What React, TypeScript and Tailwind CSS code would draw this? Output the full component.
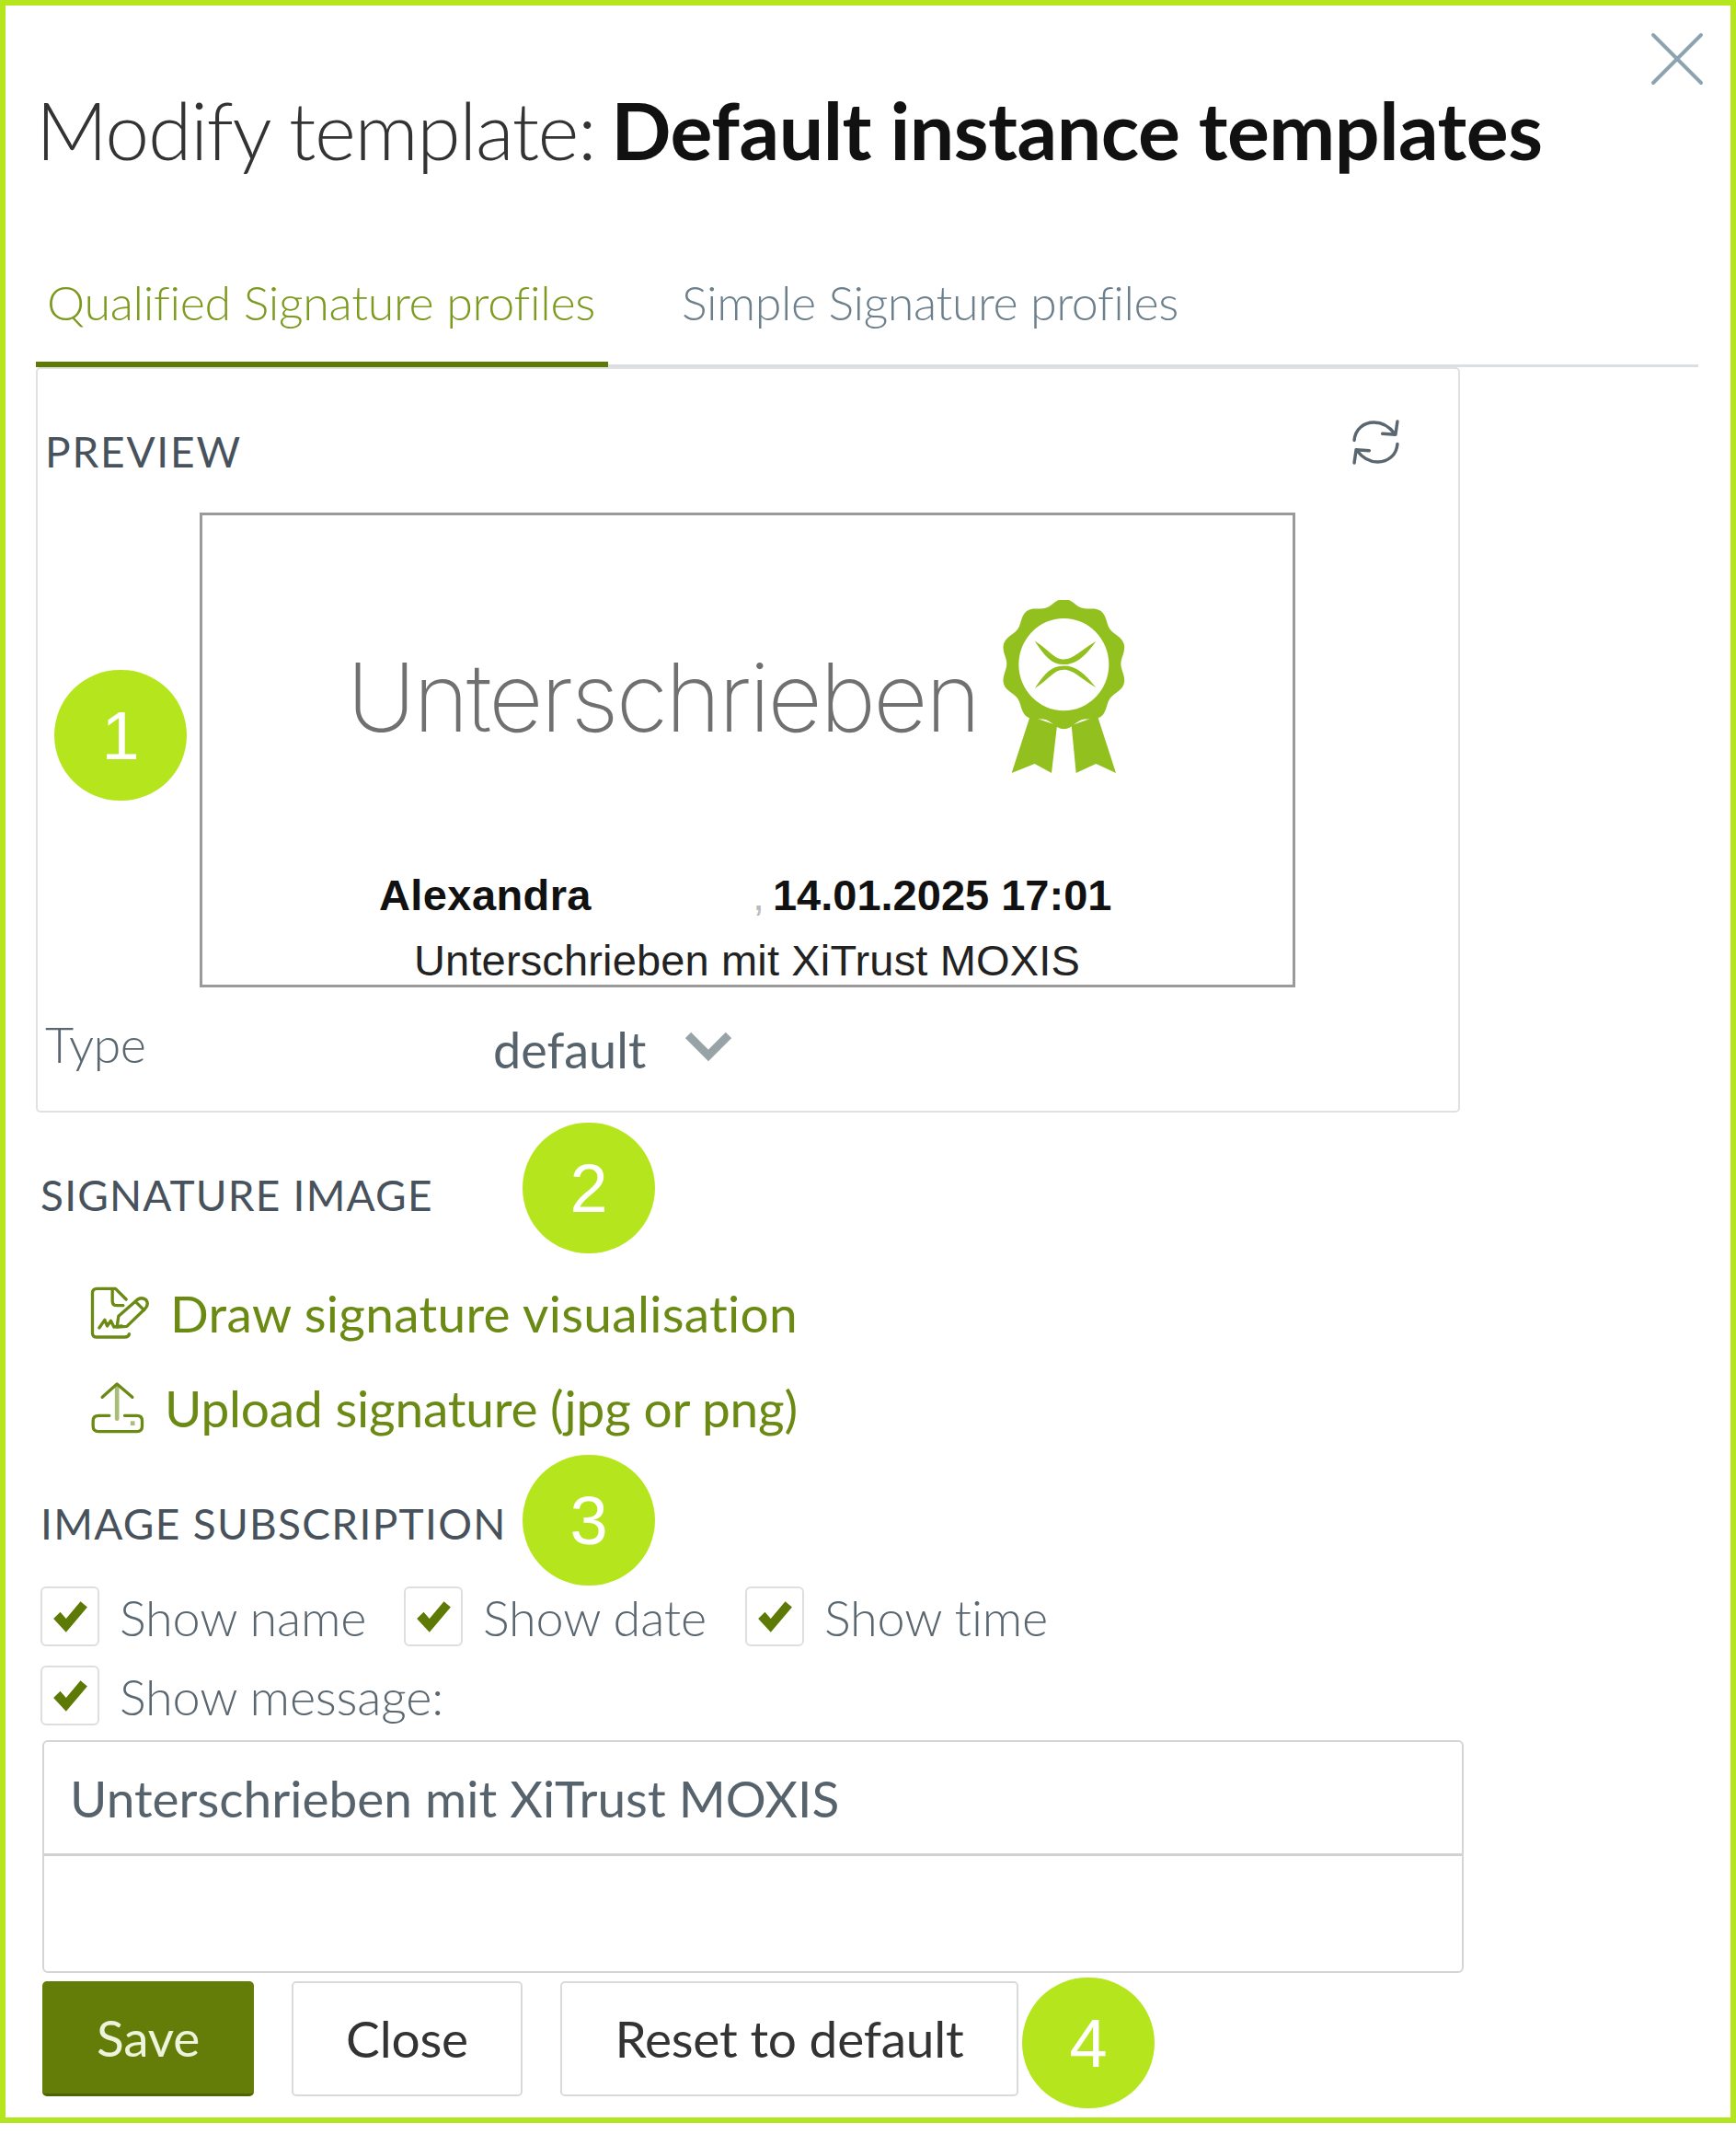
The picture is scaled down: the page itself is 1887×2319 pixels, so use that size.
import React from "react";
import { X } from "lucide-react";

const LATO = "font-['Lato','Liberation_Sans',sans-serif]";

function Medal() {
  const pts: string[] = [];
  for (let i = 0; i < 120; i++) {
    const a = (i / 120) * Math.PI * 2 - Math.PI / 2;
    const r = 196 + 10 * Math.cos(a * 10 + Math.PI * 10 / 2);
    pts.push(`${(290 + r * Math.cos(a)).toFixed(1)},${(270 + r * 1.03 * Math.sin(a)).toFixed(1)}`);
  }
  return (
    <svg viewBox="88 62 414 566" preserveAspectRatio="none" className="w-[138px] h-[189px] shrink-0">
      <path d="M180 440 L268 470 L250 625 L195 595 L120 625 Z M400 440 L315 470 L330 625 L395 595 L460 625 Z" fill="#92c01f" />
      <polygon points={pts.join(" ")} fill="#92c01f" />
      <ellipse cx="290" cy="272" rx="147" ry="150" fill="#fff" />
      <path d="M195 195 C240 222 258 255 290 255 C322 255 345 225 395 197 C355 250 330 272 290 272 C250 272 228 245 195 195Z" fill="#92c01f" />
      <path d="M195 350 C240 322 258 289 290 289 C322 289 345 318 395 347 C355 298 330 276 290 276 C250 276 228 300 195 350Z" fill="#92c01f" />
    </svg>
  );
}

function RefreshIcon() {
  return (
    <svg viewBox="0 0 52 52" className="w-[53px] h-[53px]" fill="none" stroke="#5b6770" strokeWidth="3.4" strokeLinecap="round" strokeLinejoin="round">
      <path d="M3 24 C4 12 13 5 24 5 C33 5 40 9 46 17" />
      <path d="M49 4 L47 18 L33 17" />
      <path d="M49 28 C48 40 39 47 28 47 C19 47 12 43 6 35" />
      <path d="M3 48 L5 34 L19 35" />
    </svg>
  );
}

function DrawIcon() {
  return (
    <svg viewBox="50 50 200 180" className="w-[67px] h-[60px] shrink-0" fill="none" stroke="#6b8a14" strokeWidth="10" strokeLinecap="round" strokeLinejoin="round">
      <path d="M180 208 Q178 218 165 218 L75 218 Q60 218 60 205 L60 75 Q60 60 75 60 L135 60 L170 95" />
      <path d="M125 65 L125 100 Q125 115 140 115 L160 115" />
      <path d="M145 150 L205 97 Q220 85 235 97 Q245 110 232 125 L172 183 L140 185 Z" />
      <path d="M200 102 L228 130" />
      <path d="M82 188 L100 162 L108 182 L120 165 L130 185 L155 182" />
    </svg>
  );
}

function UploadIcon() {
  return (
    <svg viewBox="50 350 185 180" className="w-[62px] h-[60px] shrink-0" fill="none" stroke="#6b8a14" strokeWidth="10" strokeLinecap="round" strokeLinejoin="round">
      <path d="M140 370 L140 475" stroke="#a9bd78" strokeWidth="14" />
      <path d="M92 405 L140 362 L190 405" />
      <path d="M115 465 L80 465 Q62 465 62 482 L62 500 Q62 517 80 517 L205 517 Q222 517 222 500 L222 482 Q222 465 205 465 L165 465" />
      <rect x="184" y="483" width="14" height="14" fill="#a9bd78" stroke="none" />
    </svg>
  );
}

function Check({ label, className }: { label: string; className?: string }) {
  return (
    <label className={`flex items-center ${className ?? ""}`}>
      <span className="w-[64px] h-[65px] rounded-[6px] border-2 border-[#dcdfe1] bg-white flex items-center justify-center shrink-0">
        <svg viewBox="0 0 40 40" className="w-[42px] h-[42px]">
          <path d="M3 22 L10 15 L16 22 L31 4 L38 10 L16 36 Z" fill="#5e7a06" />
        </svg>
      </span>
      <span className={`ml-[22px] mt-[3px] text-[54px] font-light text-[#5b6770] tracking-[-.2px] leading-[60px] whitespace-nowrap ${LATO}`}>{label}</span>
    </label>
  );
}

function Badge({ n, className }: { n: number; className: string }) {
  return (
    <div className={`absolute w-[144px] h-[142px] rounded-full bg-[#b5e61d] flex items-center justify-center text-white text-[74px] font-['Liberation_Sans',sans-serif] ${className}`}>
      {n}
    </div>
  );
}

function Btn({ children, className }: { children: React.ReactNode; className: string }) {
  return (
    <button className={`h-[125px] rounded-[5px] text-[55px] tracking-[-.2px] flex items-center justify-center ${LATO} ${className}`}>
      {children}
    </button>
  );
}

export default function App() {
  return (
    <div className={`relative w-[1887px] h-[2307px] border-[6px] border-[#b5e61d] bg-white pl-[33px] overflow-hidden ${LATO}`}>
      <X className="absolute top-[6px] right-[6px] w-[104px] h-[104px] text-[#8da4b0]" strokeWidth={0.9} />

      <h1 className="pt-[85px] h-[213px] text-[86px] leading-[100px] whitespace-nowrap text-[#333]">
        <span className="font-light tracking-[-1.4px]">Modify template: </span>
        <span className="font-bold text-[#111] tracking-[-.5px] -ml-[5px]">Default instance templates</span>
      </h1>

      <div className="flex w-[1807px] h-[180px] items-end border-b-[3px] border-[#dcdfe2]">
        <div className="w-[622px] h-[101px] -mb-[3px] border-b-[6px] border-[#5e7a06] pl-[12px] text-[#7c9a1e] text-[52px] font-light leading-[60px] tracking-[-.3px] whitespace-nowrap">
          Qualified Signature profiles
        </div>
        <div className="ml-[80px] h-[98px] text-[52px] text-[#6c7f8c] font-light leading-[60px] tracking-[-.4px] whitespace-nowrap">
          Simple Signature profiles
        </div>
      </div>

      <section className="w-[1548px] h-[810px] border-2 border-[#dfe1e3] rounded-[5px]">
        <div className="flex items-start justify-between h-[156px] pl-[8px] pr-[63px]">
          <div className="pt-[60px] text-[46px] leading-[60px] text-[#47525c] tracking-[1.8px]">PREVIEW</div>
          <div className="pt-[53px]"><RefreshIcon /></div>
        </div>
        <div className="relative ml-[176px] w-[1191px] h-[516px] border-[3px] border-[#9a9a9a] font-['Liberation_Sans',sans-serif] overflow-hidden">
          <div className="flex items-start pt-[92px] pl-[157px]">
            <span className="mt-[46px] font-['Inter',sans-serif] font-extralight text-[103px] leading-[120px] tracking-[-2.7px] text-[#707070] whitespace-nowrap">Unterschrieben</span>
            <span className="ml-[25px]"><Medal /></span>
          </div>
          <div className="mt-[105px] flex text-[47px] font-bold leading-[54px] text-[#111] whitespace-nowrap pl-[192px]">
            <span className="tracking-[.4px]">Alexandra</span>
            <span className="ml-[175px] text-[#bbb] font-normal">,</span>
            <span className="ml-[9px]">14.01.2025 17:01</span>
          </div>
          <div className="mt-[18px] text-center text-[47px] leading-[52px] tracking-[.15px] text-[#222] whitespace-nowrap pr-[1px]">Unterschrieben mit XiTrust MOXIS</div>
        </div>
        <div className="flex items-center h-[134px] pb-[10px] pl-[8px]">
          <span className="w-[487px] text-[54px] font-light text-[#5b6770] tracking-[-.5px] leading-[60px]">Type</span>
          <span className="text-[54px] text-[#56636d] leading-[60px] mt-[12px]">default</span>
          <svg viewBox="0 0 50 34" className="ml-[43px] mt-[4px] w-[50px] h-[34px]" fill="none" stroke="#98a3a8" strokeWidth="9">
            <path d="M3 5 L25 27 L47 5" />
          </svg>
        </div>
      </section>

      <section className="pl-[5px] pt-[60px]">
        <div className="text-[46px] leading-[60px] text-[#47525c] tracking-[1.2px]">SIGNATURE IMAGE</div>
        <div className="mt-[68px] ml-[53px] flex items-center gap-[21px] text-[55px] text-[#6b8a14] leading-[60px] tracking-[.3px] whitespace-nowrap">
          <DrawIcon />
          <span>Draw signature visualisation</span>
        </div>
        <div className="mt-[43px] ml-[53px] flex items-center gap-[20px] text-[55px] text-[#6b8a14] leading-[60px] tracking-[-.2px] whitespace-nowrap">
          <UploadIcon />
          <span>Upload signature (jpg or png)</span>
        </div>
      </section>

      <section className="pl-[5px] pt-[66px]">
        <div className="text-[46px] leading-[60px] text-[#47525c] tracking-[1.3px]">IMAGE SUBSCRIPTION</div>
        <div className="mt-[38px] flex">
          <Check label="Show name" className="w-[395px]" />
          <Check label="Show date" className="w-[371px]" />
          <Check label="Show time" />
        </div>
        <Check label="Show message:" className="mt-[21px]" />
      </section>

      <div className="ml-[7px] mt-[16px] w-[1545px] h-[253px] border-2 border-[#d3d6d9] rounded-[6px] flex flex-col">
        <div className="h-[124px] pt-[2px] border-b-[3px] border-[#cfd3d6] pl-[28px] flex items-center text-[55px] text-[#56636d] whitespace-nowrap">
          Unterschrieben mit XiTrust MOXIS
        </div>
      </div>

      <div className="ml-[7px] mt-[9px] flex gap-[41px]">
        <Btn className="w-[230px] bg-[#647d08] text-[#eef3dc] border-b-[3px] border-[#4d6404]">Save</Btn>
        <Btn className="w-[251px] bg-white text-[#333] border-2 border-[#d8dadc]">Close</Btn>
        <Btn className="w-[498px] bg-white text-[#333] border-2 border-[#d8dadc]">Reset to default</Btn>
      </div>

      <Badge n={1} className="left-[53px] top-[722px]" />
      <Badge n={2} className="left-[562px] top-[1214px]" />
      <Badge n={3} className="left-[562px] top-[1575px]" />
      <Badge n={4} className="left-[1105px] top-[2143px]" />
    </div>
  );
}
